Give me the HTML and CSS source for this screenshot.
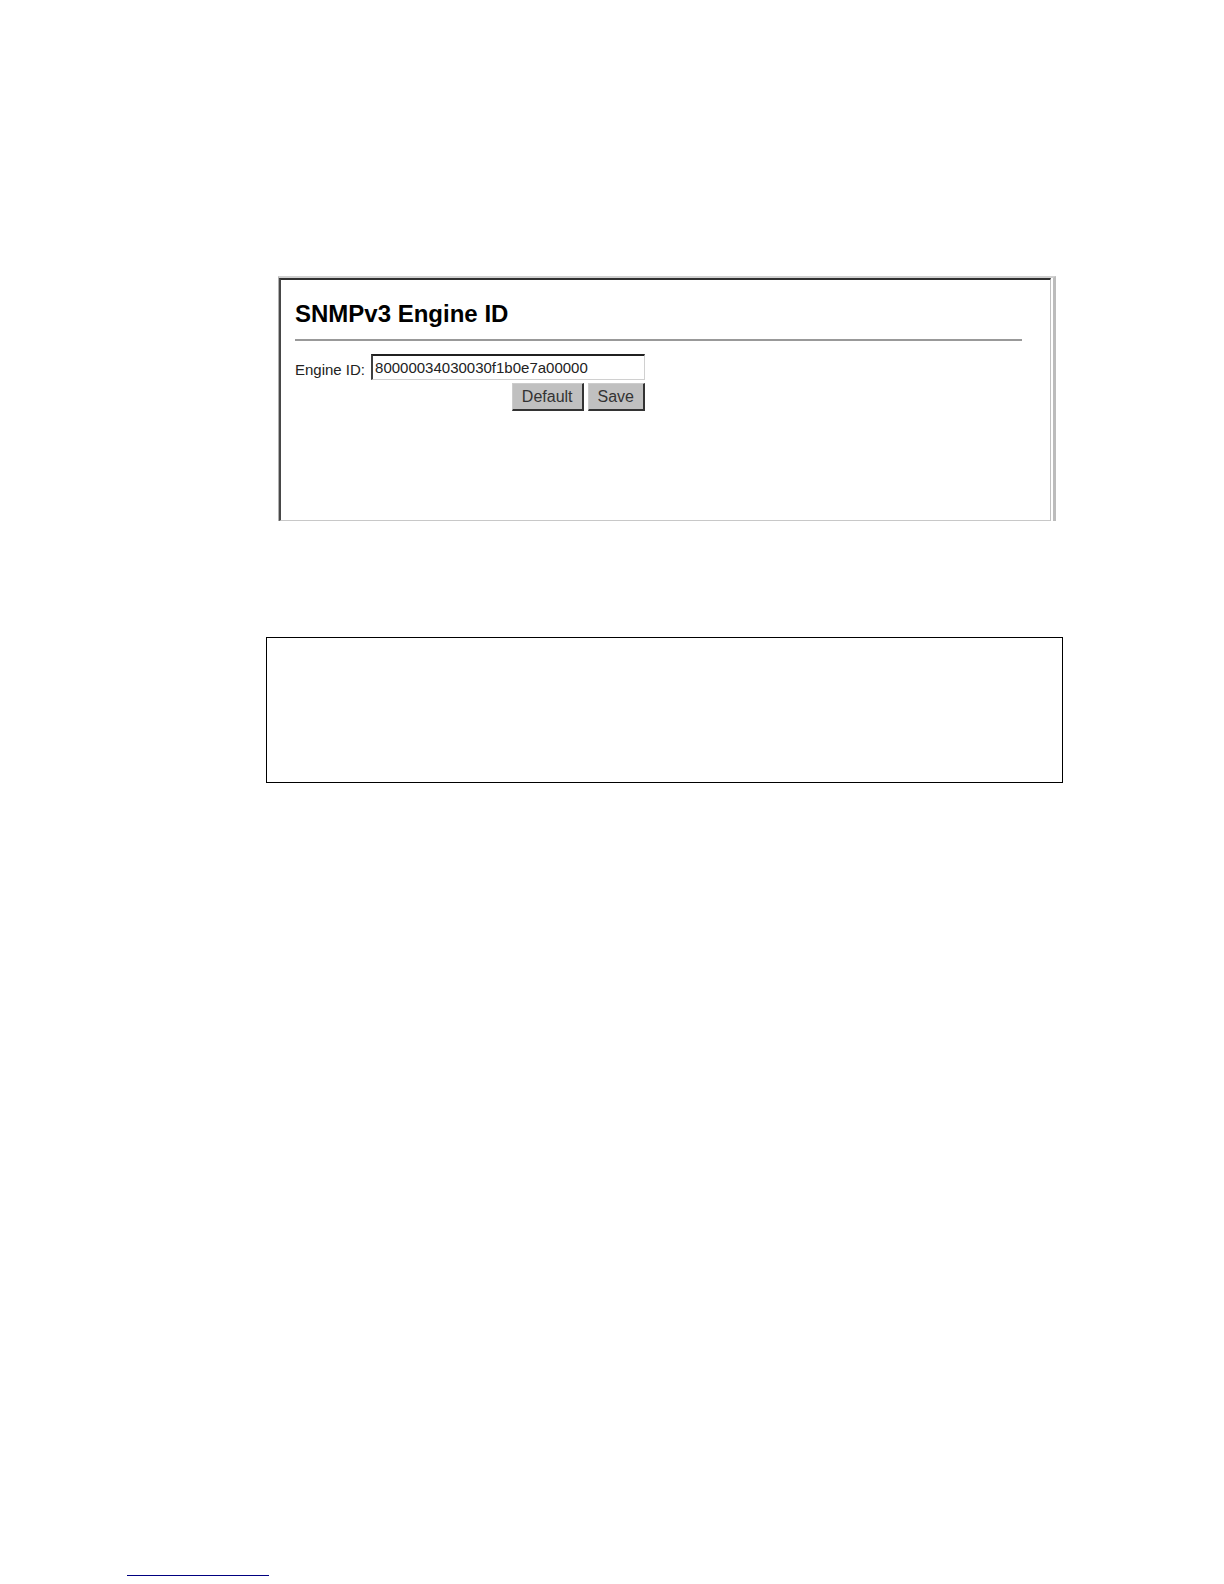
FILE: index.html
```html
<!DOCTYPE html>
<html lang="en">
<head>
    <meta charset="utf-8">
    <meta name="viewport" content="width=device-width, initial-scale=1.0">
    <title>SNMPv3 Engine ID</title>
    <link rel="stylesheet" href="styles.css">
</head>
<body>
    <main class="content">
        <div class="frame">
            <section class="panel">
                <h1>SNMPv3 Engine ID</h1>
                <hr class="divider">
                <form class="engine-form">
                    <div class="field">
                        <label for="engineId">Engine ID:</label>
                        <input type="text" id="engineId" value="80000034030030f1b0e7a00000">
                    </div>
                    <div class="buttons">
                        <button type="button">Default</button>
                        <button type="button">Save</button>
                    </div>
                </form>
            </section>
        </div>
        <div class="note"></div>
    </main>
    <footer class="footer">
        <hr class="footer-line">
    </footer>
</body>
</html>
```

FILE: styles.css
```css
* {
    box-sizing: border-box;
}
body {
    font-family: "Liberation Sans", Arial, sans-serif;
    margin: 0;
    display: flex;
    flex-direction: column;
    min-height: 100vh;
    background-color: #ffffff;
    color: #000000;
}
.content {
    padding: 276px 161px 0 266px;
}

/* sunken browser frame */
.frame {
    margin: 0 7px 0 12px;
    padding-right: 2px;
    border-top: 2px solid #d0d0d0;
    border-left: 1px solid #b0b0b0;
    border-right: 3px solid #bcbcbc;
}
.panel {
    min-height: 243px;
    padding: 18px 28px 16px 14px;
    border-top: 2px solid #303030;
    border-left: 2px solid #484848;
    border-right: 1px solid #c0c0c0;
    border-bottom: 1px solid #c8c8c8;
}
h1 {
    margin: 0;
    font-size: 24px;
    line-height: 32px;
}
.divider {
    margin: 9px 0 13px;
    border: 0;
    border-top: 2px solid #999999;
}
.engine-form {
    width: 350px;
    max-width: 100%;
}
.field {
    display: flex;
    align-items: center;
    gap: 6px;
    font-size: 15px;
}
.field label {
    padding-top: 4px;
    white-space: nowrap;
    color: #222222;
}
.field input {
    flex: 1;
    min-width: 0;
    height: 26px;
    padding: 0 2px;
    font: inherit;
    color: #222222;
    background-color: #ffffff;
    border: 1px solid #d0d0d0;
    border-top: 2px solid #202020;
    border-left: 2px solid #404040;
    border-radius: 0;
}
.buttons {
    display: flex;
    justify-content: flex-end;
    gap: 4px;
    margin-top: 3px;
}
.buttons button {
    height: 28px;
    padding: 0 9px;
    font-family: inherit;
    font-size: 16px;
    color: #333333;
    background-color: #c0c0c0;
    border: 1px solid #cccccc;
    border-right: 2px solid #333333;
    border-bottom: 2px solid #333333;
    border-radius: 0;
}

.note {
    margin-top: 116px;
    min-height: 146px;
    border: 1px solid #000000;
}
.footer {
    margin-top: auto;
    padding: 0 127px 8px;
}
.footer-line {
    width: 142px;
    margin: 0;
    border: 0;
    border-top: 1px solid #000080;
}
```
